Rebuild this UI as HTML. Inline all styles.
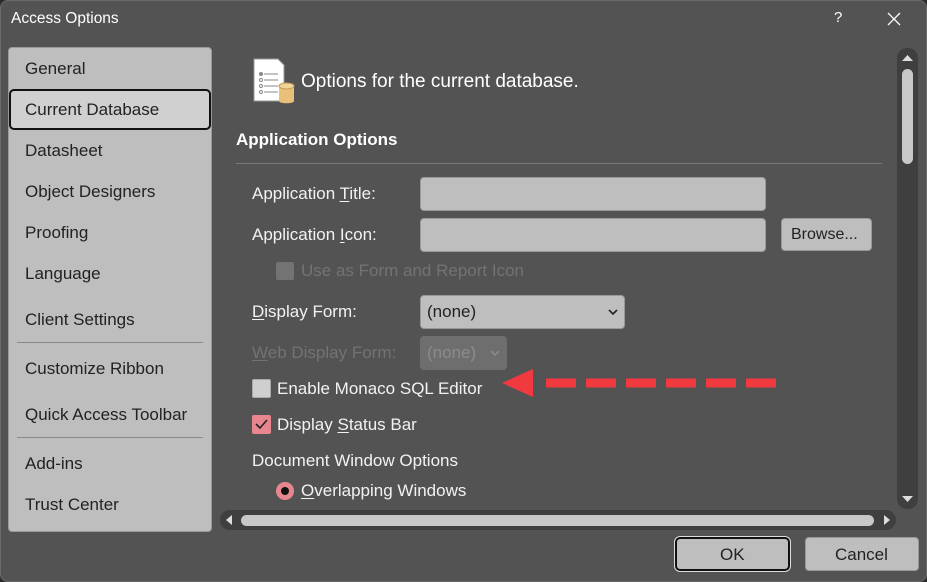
<!DOCTYPE html>
<html><head><style>
*{box-sizing:border-box;margin:0;padding:0}
body{width:927px;height:582px;background:#2b2b2b;font-family:"Liberation Sans",sans-serif;overflow:hidden;position:relative}
.win{position:absolute;left:0;top:0;width:927px;height:582px;background:#535353;box-shadow:inset 0 0 0 1px #6a6a6a;border-radius:8px}
.a{position:absolute;white-space:nowrap}
.t{color:#fff;font-size:16px}
.s{color:#222;font-size:17px;left:25px}
.l{color:#f2f2f2;font-size:17px;left:252px}
.box{position:absolute;background:#bebebe;border:1px solid #999;border-radius:4px}
u{text-decoration:underline;text-underline-offset:2px}
</style></head><body><div class="win">
<div class="a t" style="left:11px;top:10px;font-size:15.5px">Access Options</div>
<div class="a t" style="left:834px;top:9px;font-size:15px">?</div>
<svg class="a" style="left:887px;top:12px" width="14" height="14"><path d="M1 1L13 13M13 1L1 13" stroke="#fff" stroke-width="1.3"/></svg>

<div class="a" style="left:8px;top:47px;width:204px;height:485px;background:#bebebe;border:1px solid #9a9a9a;border-radius:4px"></div>
<div class="a" style="left:9px;top:89px;width:202px;height:41px;background:#d0d0d0;border:2px solid #111;border-radius:5px"></div>
<div class="a s" style="top:59px">General</div>
<div class="a s" style="top:100px">Current Database</div>
<div class="a s" style="top:141px">Datasheet</div>
<div class="a s" style="top:182px">Object Designers</div>
<div class="a s" style="top:223px">Proofing</div>
<div class="a s" style="top:264px">Language</div>
<div class="a s" style="top:310px">Client Settings</div>
<div class="a" style="left:17px;top:342px;width:186px;height:1px;background:#8a8a8a"></div>
<div class="a s" style="top:359px">Customize Ribbon</div>
<div class="a s" style="top:405px">Quick Access Toolbar</div>
<div class="a" style="left:17px;top:437px;width:186px;height:1px;background:#8a8a8a"></div>
<div class="a s" style="top:454px">Add-ins</div>
<div class="a s" style="top:495px">Trust Center</div>

<svg class="a" style="left:253px;top:58px" width="44" height="46">
<path d="M1 1H25L31 7V43H1Z" fill="#fff" stroke="#999"/>
<g fill="none" stroke="#888"><circle cx="8" cy="16" r="1.5" fill="#888"/><circle cx="8" cy="22" r="1.5"/><circle cx="8" cy="28" r="1.5"/><circle cx="8" cy="34" r="1.5"/><path d="M11 16H25M11 22H25M11 28H25M11 34H25"/></g>
<path d="M26 28V43C26 46 41 46 41 43V28Z" fill="#e9c07a"/><ellipse cx="33.5" cy="28" rx="7.5" ry="3" fill="#f0d49a" stroke="#c89a50"/>
</svg>
<div class="a" style="left:301px;top:71px;font-size:19px;color:#fff">Options for the current database.</div>
<div class="a" style="left:236px;top:130px;font-size:17px;font-weight:bold;color:#fff">Application Options</div>
<div class="a" style="left:236px;top:163px;width:646px;height:1px;background:#777"></div>

<div class="a l" style="top:184px">Application <u>T</u>itle:</div>
<div class="box" style="left:420px;top:177px;width:346px;height:34px"></div>
<div class="a l" style="top:225px">Application <u>I</u>con:</div>
<div class="box" style="left:420px;top:218px;width:346px;height:34px"></div>
<div class="box" style="left:781px;top:218px;width:91px;height:33px"></div>
<div class="a" style="left:791px;top:226px;font-size:16px;color:#222">Browse...</div>
<div class="a" style="left:276px;top:262px;width:18px;height:18px;background:#737373;border-radius:2px"></div>
<div class="a" style="left:301px;top:261px;font-size:17px;color:#737373">Use as Form and Report Icon</div>

<div class="a l" style="top:302px"><u>D</u>isplay Form:</div>
<div class="box" style="left:420px;top:295px;width:205px;height:34px"></div>
<div class="a" style="left:427px;top:302px;font-size:17px;color:#222">(none)</div>
<svg class="a" style="left:608px;top:308px" width="10" height="8"><path d="M1 2L5 6L9 2" stroke="#222" stroke-width="1.6" fill="none"/></svg>
<div class="a l" style="top:343px;color:#737373"><u>W</u>eb Display Form:</div>
<div class="a" style="left:420px;top:336px;width:87px;height:34px;background:#6e6e6e;border-radius:4px"></div>
<div class="a" style="left:427px;top:343px;font-size:17px;color:#8c8c8c">(none)</div>
<svg class="a" style="left:490px;top:349px" width="10" height="8"><path d="M1 2L5 6L9 2" stroke="#8c8c8c" stroke-width="1.5" fill="none"/></svg>

<div class="a" style="left:252px;top:379px;width:19px;height:19px;background:#cfcfcf;border:1px solid #aaa;border-radius:2px"></div>
<div class="a l" style="left:277px;top:379px">Enable Monaco SQL Editor</div>
<svg class="a" style="left:500px;top:366px" width="280" height="34">
<path d="M2 17L33 3V31Z" fill="#f03a40"/>
<path d="M46 17H776" stroke="#f03a40" stroke-width="9" stroke-dasharray="30 10"/>
</svg>
<div class="a" style="left:252px;top:415px;width:19px;height:19px;background:#e8868f;border-radius:2px"></div>
<svg class="a" style="left:255px;top:419px" width="13" height="11"><path d="M1 5L5 9L12 1" stroke="#222" stroke-width="1.6" fill="none"/></svg>
<div class="a l" style="left:277px;top:415px">Display <u>S</u>tatus Bar</div>
<div class="a l" style="top:451px">Document Window Options</div>
<div class="a" style="left:276px;top:482px;width:18px;height:18px;border-radius:50%;background:#e8868f"></div>
<div class="a" style="left:281px;top:487px;width:8px;height:8px;border-radius:50%;background:#111"></div>
<div class="a l" style="left:301px;top:481px"><u>O</u>verlapping Windows</div>

<div class="a" style="left:897px;top:48px;width:21px;height:461px;background:#3f3f3f;border-radius:10px"></div>
<svg class="a" style="left:901px;top:53px" width="13" height="10"><path d="M1 8L6.5 2L12 8Z" fill="#ddd"/></svg>
<div class="a" style="left:902px;top:69px;width:11px;height:95px;background:#c8c8c8;border-radius:6px"></div>
<svg class="a" style="left:901px;top:494px" width="13" height="10"><path d="M1 2L6.5 8L12 2Z" fill="#ddd"/></svg>
<div class="a" style="left:220px;top:510px;width:676px;height:20px;background:#3f3f3f;border-radius:10px"></div>
<svg class="a" style="left:224px;top:514px" width="10" height="12"><path d="M8 1L2 6L8 11Z" fill="#ddd"/></svg>
<svg class="a" style="left:882px;top:514px" width="10" height="12"><path d="M2 1L8 6L2 11Z" fill="#ddd"/></svg>
<div class="a" style="left:241px;top:515px;width:633px;height:11px;background:#c8c8c8;border-radius:6px"></div>

<div class="a" style="left:675px;top:537px;width:115px;height:34px;background:#bebebe;border:2px solid #111;outline:1px solid #ddd;border-radius:5px"></div>
<div class="a" style="left:720px;top:545px;font-size:17px;color:#222">OK</div>
<div class="box" style="left:805px;top:537px;width:114px;height:34px"></div>
<div class="a" style="left:835px;top:545px;font-size:17px;color:#222">Cancel</div>
</div></body></html>
